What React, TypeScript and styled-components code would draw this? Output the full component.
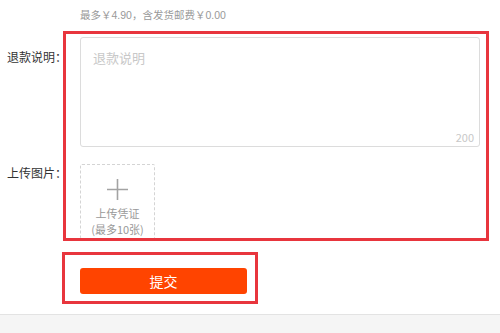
import React from 'react';
import styled, { createGlobalStyle } from 'styled-components';

const GlobalStyle = createGlobalStyle`
  html, body {
    margin: 0;
    padding: 0;
    background: #fff;
  }
  body {
    font-family: "Noto Sans CJK SC", "Liberation Sans", sans-serif;
    color: #333;
  }
`;

const Page = styled.div`
  width: 500px;
  height: 333px;
  display: flex;
  flex-direction: column;
  overflow: hidden;
`;

const Note = styled.div`
  margin: 8px 0 0 80px;
  font-family: "Liberation Sans", "Noto Sans CJK SC", sans-serif;
  font-size: 10.5px;
  line-height: 14px;
  color: #999;
`;

const Form = styled.div`
  margin-top: 9px;
  display: grid;
  grid-template-columns: 63px 426px;
  grid-template-rows: auto auto;
`;

const Label = styled.div<{ $row: number }>`
  grid-column: 1;
  grid-row: ${p => p.$row};
  padding: 18px 0 0 7px;
  font-size: 12px;
  line-height: 16px;
  white-space: nowrap;
  color: #333;
`;

const Frame = styled.div`
  grid-column: 2;
  grid-row: 1 / 3;
  border: 3px solid #e8353d;
  pointer-events: none;
`;

const TextField = styled.div`
  grid-column: 2;
  grid-row: 1;
  margin: 6px 0 0 17px;
  width: 400px;
  height: 110px;
  position: relative;
`;

const TextArea = styled.textarea`
  box-sizing: border-box;
  width: 100%;
  height: 100%;
  border: 1px solid #dcdcdc;
  border-radius: 3px;
  padding: 12px 12px;
  resize: none;
  font-family: inherit;
  font-size: 13px;
  line-height: 16px;
  color: #333;
  outline: none;
  &::placeholder {
    color: #c8c8c8;
  }
`;

const Counter = styled.span`
  position: absolute;
  right: 6px;
  bottom: 3px;
  font-size: 11px;
  line-height: 14px;
  color: #c8c8c8;
`;

const Upload = styled.div`
  grid-column: 2;
  grid-row: 2;
  margin: 17px 0 2px 17px;
  box-sizing: border-box;
  width: 75px;
  height: 75px;
  border: 1px dashed #d4d4d4;
  border-radius: 2px;
  display: flex;
  flex-direction: column;
  align-items: center;
  padding-top: 14px;
  gap: 0;
`;

const UploadText = styled.div<{ $first?: boolean }>`
  margin-top: ${p => (p.$first ? 5 : 0)}px;
  font-size: 11px;
  line-height: 16px;
  color: #999;
  white-space: nowrap;
`;

const SubmitFrame = styled.div`
  margin: 11px 0 0 62px;
  box-sizing: border-box;
  width: 196px;
  height: 52px;
  border: 3px solid #e8353d;
  padding: 13px 0 0 15px;
`;

const SubmitButton = styled.button`
  width: 167px;
  height: 26px;
  border: none;
  border-radius: 3px;
  background: #ff4400;
  color: #fff;
  font-family: inherit;
  font-size: 14px;
  line-height: 26px;
  padding: 0;
  cursor: pointer;
`;

const Footer = styled.div`
  margin-top: 10px;
  flex: 1;
  border-top: 1px solid #e3e3e3;
  background: #f5f5f5;
`;

const PlusIcon = () => (
  <svg width="21" height="21" viewBox="0 0 21 21">
    <path d="M10.5 0v21M0 10.5h21" stroke="#a3a3a3" strokeWidth="1.6" fill="none" />
  </svg>
);

export default function App() {
  return (
    <Page>
      <GlobalStyle />
      <Note>最多￥4.90，含发货邮费￥0.00</Note>
      <Form>
        <Label $row={1}>退款说明：</Label>
        <Label $row={2}>上传图片：</Label>
        <TextField>
          <TextArea placeholder="退款说明" />
          <Counter>200</Counter>
        </TextField>
        <Upload>
          <PlusIcon />
          <UploadText $first>上传凭证</UploadText>
          <UploadText>(最多10张)</UploadText>
        </Upload>
        <Frame />
      </Form>
      <SubmitFrame>
        <SubmitButton>提交</SubmitButton>
      </SubmitFrame>
      <Footer />
    </Page>
  );
}
